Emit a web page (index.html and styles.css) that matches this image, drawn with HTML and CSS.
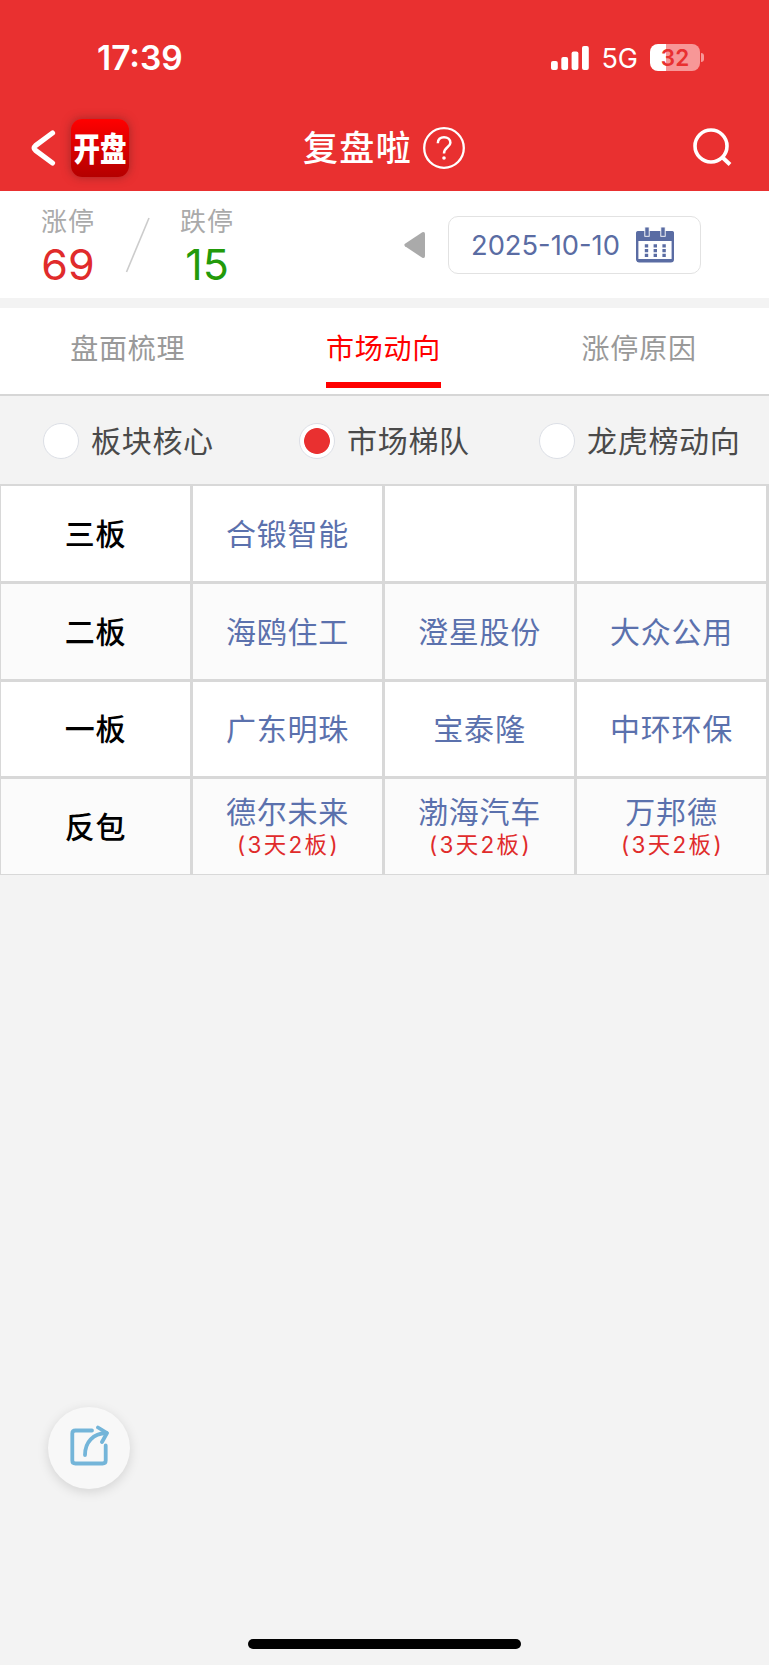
FILE: index.html
```
<!DOCTYPE html>
<html lang="zh-CN">
<head>
<meta charset="UTF-8">
<meta name="viewport" content="width=device-width, initial-scale=1.0">
<title>复盘啦</title>
<link rel="stylesheet" href="styles.css">
</head>
<body>
<header class="header">
    <div class="status-bar">
        <div class="time">17:39</div>
        <div class="status-right">
            <svg class="signal" width="38" height="24" viewBox="0 0 38 24" fill="#fff">
                <rect x="0" y="15" width="6.8" height="9" rx="2"/>
                <rect x="10.3" y="11" width="6.8" height="13" rx="2"/>
                <rect x="20.6" y="5.5" width="6.8" height="18.5" rx="2"/>
                <rect x="31" y="0" width="6.8" height="24" rx="2"/>
            </svg>
            <span class="network">5G</span>
            <div class="battery">32</div>
            <div class="battery-tip"></div>
        </div>
    </div>
    <nav class="nav">
        <div class="nav-left">
            <svg width="26" height="38" viewBox="0 0 26 38" fill="none" stroke="#fff" stroke-width="5.2" stroke-linecap="round" stroke-linejoin="round">
                <path d="M22.5 4 5.5 16.6Q2.7 19 5.5 21.4L22.5 34"/>
            </svg>
            <div class="logo"><span>开盘</span></div>
        </div>
        <div class="nav-title">
            <span>复盘啦</span>
            <svg width="42" height="42" viewBox="0 0 42 42" fill="none" stroke="#fff">
                <circle cx="21" cy="21" r="19.8" stroke-width="2.3"/>
                <path d="M14.8 16.2C14.8 12.4 17.4 10.2 21 10.2S27.4 12.5 27.4 15.7C27.4 20.2 21 20 21 26.5" stroke-width="2.5"/>
                <circle cx="21" cy="31" r="1.8" fill="#fff" stroke="none"/>
            </svg>
        </div>
        <svg class="search" width="40" height="40" viewBox="0 0 40 40" fill="none" stroke="#fff" stroke-width="3.6">
            <circle cx="18" cy="18" r="16"/>
            <path d="M28.5 28.5 37 36.5" stroke-width="4"/>
        </svg>
    </nav>
</header>

<section class="summary">
    <div class="stat">
        <div class="stat-label">涨停</div>
        <div class="stat-value up">69</div>
    </div>
    <svg class="slash" width="26" height="56" viewBox="0 0 26 56" stroke="#ccc" stroke-width="1.6">
        <path d="M24 1 1.5 55"/>
    </svg>
    <div class="stat">
        <div class="stat-label">跌停</div>
        <div class="stat-value down">15</div>
    </div>
    <div class="date-picker">
        <svg width="21" height="28" viewBox="0 0 21 28" fill="#aaa">
            <path d="M18.3 1.2 1 12.8Q-.4 14 1 15.2L18.3 26.8Q21 27.6 21 25V3Q21 .4 18.3 1.2Z"/>
        </svg>
        <div class="date-box">
            <span>2025-10-10</span>
            <svg width="38" height="36" viewBox="0 0 38 36">
                <rect x="1.2" y="5.2" width="35.6" height="29" rx="2" fill="#fff" stroke="#5a6ca3" stroke-width="2.4"/>
                <path d="M0 14V6Q0 4 2 4H36Q38 4 38 6V14Z" fill="#5a6ca3"/>
                <path d="M1 33.5H37" stroke="#5a6ca3" stroke-width="3"/>
                <g fill="#5a6ca3" stroke="#fff" stroke-width=".9">
                    <rect x="8.8" y="0" width="4.4" height="9.3"/>
                    <rect x="24.8" y="0" width="4.4" height="9.3"/>
                </g>
                <path d="M8.8 18.8H30M8.8 23.6H30M8.8 28.4H30" stroke="#5a6ca3" stroke-width="3.2" stroke-dasharray="3.4 5.4"/>
            </svg>
        </div>
    </div>
</section>

<div class="tabs">
    <div class="tab">盘面梳理</div>
    <div class="tab active">市场动向</div>
    <div class="tab">涨停原因</div>
</div>

<div class="filters">
    <div class="filter"><i class="radio"></i>板块核心</div>
    <div class="filter"><i class="radio checked"></i>市场梯队</div>
    <div class="filter"><i class="radio"></i>龙虎榜动向</div>
</div>

<div class="ladder">
    <div class="cell level">三板</div>
    <div class="cell">合锻智能</div>
    <div class="cell"></div>
    <div class="cell"></div>

    <div class="cell level even">二板</div>
    <div class="cell even">海鸥住工</div>
    <div class="cell even">澄星股份</div>
    <div class="cell even">大众公用</div>

    <div class="cell level">一板</div>
    <div class="cell">广东明珠</div>
    <div class="cell">宝泰隆</div>
    <div class="cell">中环环保</div>

    <div class="cell level even">反包</div>
    <div class="cell even">德尔未来<small>(3天2板)</small></div>
    <div class="cell even">渤海汽车<small>(3天2板)</small></div>
    <div class="cell even">万邦德<small>(3天2板)</small></div>
</div>

<div class="share">
    <svg width="40" height="42" viewBox="0 0 40 42" fill="none" stroke="#74b5d9" stroke-width="3.8" stroke-linecap="round" stroke-linejoin="round">
        <path d="M23 5.5H6.5Q3.3 5.5 3.3 8.5V35.5Q3.3 38.5 6.5 38.5H33.5Q36.7 38.5 36.7 35.5V20.5"/>
        <path d="M16 30C16 17 24 8.5 37.5 8"/>
        <path d="M29 2.5 38 8 33 17"/>
    </svg>
</div>
<div class="home-indicator"></div>
</body>
</html>
```
FILE: styles.css
```
* {
    box-sizing: border-box;
}

body {
    position: relative;
    margin: 0;
    height: 1665px;
    background-color: #f3f3f3;
    font-family: Inter, "Noto Sans CJK SC", sans-serif;
    overflow: hidden;
}

svg {
    display: block;
    flex-shrink: 0;
}

.header {
    height: 191px;
    background-color: #e93030;
    color: #fff;
}

.status-bar {
    display: flex;
    justify-content: space-between;
    align-items: center;
    height: 106px;
    padding: 9px 65px 0 97px;
}

.time {
    font-size: 33.5px;
    font-weight: 600;
    line-height: 40px;
}

.status-right {
    display: flex;
    align-items: center;
}

.network {
    margin: 0 12px 0 12px;
    padding-top: 2px;
    font-size: 27px;
    line-height: 30px;
}

.battery {
    width: 50px;
    height: 27px;
    border-radius: 8px;
    background: linear-gradient(90deg, #fff 32%, #f79797 32%);
    color: #e93030;
    font-size: 22.5px;
    font-weight: 600;
    line-height: 27px;
    text-align: center;
}

.battery-tip {
    width: 3px;
    height: 9px;
    margin-left: 1px;
    border-radius: 0 4px 4px 0;
    background-color: #f79797;
}

.nav {
    display: flex;
    justify-content: space-between;
    align-items: center;
    height: 84px;
    padding: 0 36px 0 30px;
}

.nav-left {
    display: flex;
    align-items: center;
    gap: 15px;
    width: 140px;
}

.logo {
    display: flex;
    justify-content: center;
    align-items: center;
    width: 58px;
    height: 58px;
    border-radius: 11px;
    background: linear-gradient(#f00, #b40000);
    box-shadow: 0 0 10px rgba(90, 30, 30, 0.5);
    font-size: 26.5px;
    font-weight: 900;
    line-height: 30px;
}

.logo span {
    transform: scaleY(1.25);
}

.nav-title {
    display: flex;
    align-items: center;
    gap: 11px;
    font-size: 35px;
    font-weight: 500;
    letter-spacing: 1.3px;
}

.nav-title span {
    padding-bottom: 5px;
}

.search {
    margin-left: 95px;
}

.summary {
    display: flex;
    height: 107px;
    padding-left: 33px;
    background-color: #fff;
}

.stat {
    width: 70px;
    padding-top: 14px;
    text-align: center;
}

.stat-label {
    color: #aaa;
    font-size: 26px;
    line-height: 33px;
    letter-spacing: 1px;
}

.stat-value {
    margin-top: 1px;
    font-size: 43px;
    line-height: 50px;
}

.up {
    color: #e02b2b;
}

.down {
    color: #229a0a;
}

.slash {
    margin: 26px 21px 0 22px;
}

.date-picker {
    display: flex;
    align-items: center;
    gap: 23px;
    height: 108px;
    margin: 0 68px 0 auto;
}

.date-box {
    display: flex;
    justify-content: space-between;
    align-items: center;
    width: 253px;
    height: 58px;
    padding: 0 26px 0 22px;
    border: 1px solid #e2e2e2;
    border-radius: 10px;
    color: #5a6ca3;
    font-size: 27.3px;
}

.tabs {
    display: flex;
    height: 88px;
    margin-top: 10px;
    padding-right: 2px;
    border-bottom: 2px solid #d6d6d6;
    background-color: #fff;
    justify-content: space-around;
}

.tab {
    height: 80px;
    padding-bottom: 4px;
    border-bottom: 6px solid transparent;
    color: #999;
    font-size: 28px;
    line-height: 83px;
    letter-spacing: 0.8px;
}

.tab.active {
    border-color: #f00;
    color: #f00;
}

.filters {
    display: flex;
    align-items: center;
    height: 88px;
    padding-left: 43px;
}

.filter {
    display: flex;
    flex-shrink: 0;
    align-items: center;
    width: 256px;
    padding-top: 1px;
    color: #4a4a4a;
    font-size: 30px;
    line-height: 40px;
    letter-spacing: 0.7px;
}

.filter:nth-child(2) {
    width: 240px;
}

.filter:last-child {
    width: auto;
}

.radio {
    width: 36px;
    height: 36px;
    margin-right: 12px;
    border: 1.5px solid #dcdfe6;
    border-radius: 50%;
    background-color: #fff;
}

.radio.checked {
    background: radial-gradient(circle, #e93030 12.5px, #fff 13.3px);
}

.ladder {
    display: grid;
    grid-template-columns: repeat(4, 1fr);
    grid-template-rows: repeat(4, 1fr);
    gap: 3px;
    height: 391px;
    padding: 2px 3px 1px 1px;
    background-color: #d8d8d8;
}

.cell {
    display: flex;
    flex-direction: column;
    justify-content: center;
    align-items: center;
    padding-top: 1px;
    background-color: #fff;
    color: #5b71ad;
    font-size: 30px;
    line-height: 34px;
    letter-spacing: 0.8px;
}

.cell.even {
    background-color: #fbfbfb;
}

.cell.level {
    color: #000;
    font-weight: 500;
}

.cell small {
    padding: 1px 0 0 2px;
    color: #e02b2b;
    font-size: 22.5px;
    line-height: 30px;
    letter-spacing: 2.3px;
}

.share {
    position: absolute;
    left: 48px;
    top: 1407px;
    display: flex;
    justify-content: center;
    align-items: center;
    width: 82px;
    height: 82px;
    padding-bottom: 4px;
    border-radius: 50%;
    background-color: #f8f8f8;
    box-shadow: 0 3px 12px rgba(0, 0, 0, 0.13);
}

.home-indicator {
    position: absolute;
    left: 248px;
    top: 1639px;
    width: 273px;
    height: 10px;
    border-radius: 5px;
    background-color: #000;
}
```
